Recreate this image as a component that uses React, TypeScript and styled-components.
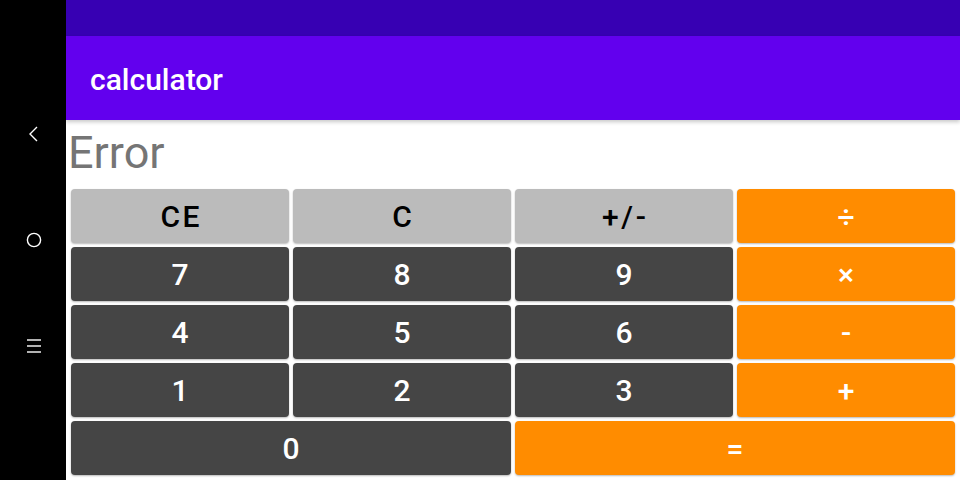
import styled, { createGlobalStyle } from "styled-components";

const GlobalStyle = createGlobalStyle`
    html, body {
        margin: 0;
        padding: 0;
        width: 960px;
        height: 480px;
        overflow: hidden;
        background: #ffffff;
        font-family: Roboto, "Noto Sans", "Liberation Sans", sans-serif;
    }
`;

const StyledScreen = styled.div`
    width: 960px;
    height: 480px;
    display: flex;
`;

const StyledNavBar = styled.div`
    width: 66px;
    height: 100%;
    background-color: #000000;
    display: flex;
    flex-direction: column;
    align-items: center;
    justify-content: center;
    gap: 90px;
    padding-left: 1px;
    box-sizing: border-box;
`;

const StyledNavIcon = styled.svg`
    width: 16px;
    height: 16px;
    display: block;
`;

const StyledMain = styled.div`
    flex: 1;
    display: flex;
    flex-direction: column;
    min-width: 0;
`;

const StyledStatusBar = styled.div`
    height: 36px;
    background-color: #3700b3;
`;

const StyledAppBar = styled.div`
    height: 84px;
    background-color: #6200ee;
    display: flex;
    align-items: center;
    padding-left: 24px;
    box-sizing: border-box;
    box-shadow: 0 2px 4px rgba(0, 0, 0, 0.22);
    position: relative;
    z-index: 1;
`;

const StyledTitle = styled.div`
    color: #ffffff;
    font-size: 30px;
    font-weight: 500;
    padding-top: 2px;
`;

const StyledBody = styled.div`
    flex: 1;
    padding: 6px 5px 5px 5px;
    box-sizing: border-box;
    display: flex;
    flex-direction: column;
`;

const StyledDisplay = styled.div`
    height: 53px;
    line-height: 53px;
    font-size: 45px;
    color: #757575;
    margin-left: -3px;
    margin-bottom: 10px;
`;

const StyledKeypad = styled.div`
    display: grid;
    grid-template-columns: repeat(4, 218px);
    grid-template-rows: repeat(5, 54px);
    gap: 4px;
`;

type Kind = "function" | "digit" | "operator";

const colors: Record<Kind, { bg: string; fg: string }> = {
    function: { bg: "#bbbbbb", fg: "#000000" },
    digit: { bg: "#454545", fg: "#ffffff" },
    operator: { bg: "#ff8c00", fg: "#ffffff" },
};

const StyledKey = styled.button<{ $kind: Kind; $span?: number }>`
    grid-column: span ${p => p.$span ?? 1};
    border: none;
    border-radius: 4px;
    background-color: ${p => colors[p.$kind].bg};
    color: ${p => colors[p.$kind].fg};
    font-family: Roboto, "Noto Sans", "Liberation Sans", sans-serif;
    font-size: 30px;
    font-weight: 500;
    letter-spacing: 2.6px;
    text-transform: uppercase;
    display: flex;
    align-items: center;
    justify-content: center;
    padding: 0 0 0 2.6px;
    box-shadow: 0 1px 2px rgba(0, 0, 0, 0.28);
    cursor: pointer;
`;

const keys: { label: string; kind: Kind; span?: number }[] = [
    { label: "CE", kind: "function" },
    { label: "C", kind: "function" },
    { label: "+/-", kind: "function" },
    { label: "÷", kind: "operator" },
    { label: "7", kind: "digit" },
    { label: "8", kind: "digit" },
    { label: "9", kind: "digit" },
    { label: "×", kind: "operator" },
    { label: "4", kind: "digit" },
    { label: "5", kind: "digit" },
    { label: "6", kind: "digit" },
    { label: "-", kind: "operator" },
    { label: "1", kind: "digit" },
    { label: "2", kind: "digit" },
    { label: "3", kind: "digit" },
    { label: "+", kind: "operator" },
    { label: "0", kind: "digit", span: 2 },
    { label: "=", kind: "operator", span: 2 },
];

export default function App() {
    const renderNavBar = () => {
        return (
            <StyledNavBar>
                <StyledNavIcon viewBox="0 0 16 16">
                    <polyline points="11,1 4,8 11,15" fill="none" stroke="#ffffff" strokeWidth="1.4" />
                </StyledNavIcon>
                <StyledNavIcon viewBox="0 0 16 16">
                    <circle cx="8" cy="8" r="6.6" fill="none" stroke="#ffffff" strokeWidth="1.4" />
                </StyledNavIcon>
                <StyledNavIcon viewBox="0 0 16 16">
                    <line x1="1" y1="2" x2="15" y2="2" stroke="#ffffff" strokeWidth="1.4" />
                    <line x1="1" y1="8" x2="15" y2="8" stroke="#ffffff" strokeWidth="1.4" />
                    <line x1="1" y1="14" x2="15" y2="14" stroke="#ffffff" strokeWidth="1.4" />
                </StyledNavIcon>
            </StyledNavBar>
        );
    };

    return (
        <>
            <GlobalStyle />
            <StyledScreen>
                {renderNavBar()}
                <StyledMain>
                    <StyledStatusBar />
                    <StyledAppBar>
                        <StyledTitle>calculator</StyledTitle>
                    </StyledAppBar>
                    <StyledBody>
                        <StyledDisplay>Error</StyledDisplay>
                        <StyledKeypad>
                            {keys.map(key => (
                                <StyledKey key={key.label} $kind={key.kind} $span={key.span}>
                                    {key.label}
                                </StyledKey>
                            ))}
                        </StyledKeypad>
                    </StyledBody>
                </StyledMain>
            </StyledScreen>
        </>
    );
}
